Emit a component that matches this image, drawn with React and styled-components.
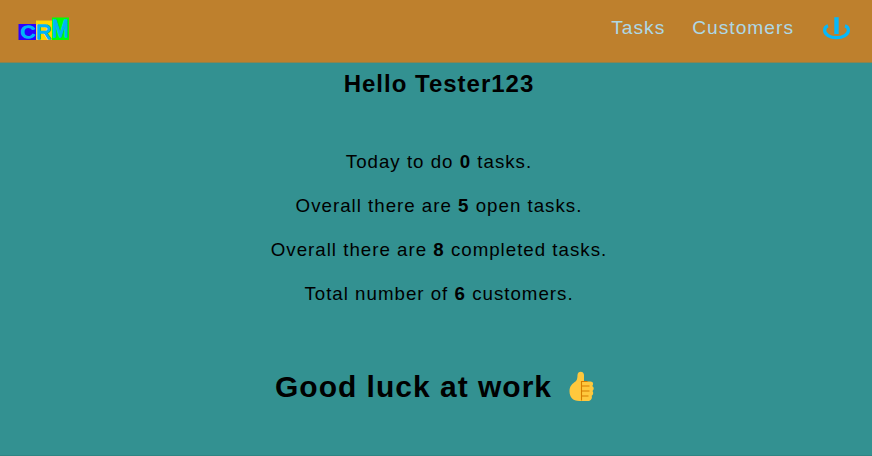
import React from "react";
import styled, { createGlobalStyle } from "styled-components";

const GlobalStyle = createGlobalStyle`
  * { box-sizing: border-box; }
  body {
    margin: 0;
    background: #339191;
    color: #000;
    font-family: "Liberation Sans", Arial, sans-serif;
    font-size: 19.2px;
    letter-spacing: 1px;
    overflow: hidden;
  }
`;

const Page = styled.div`
  display: flex;
  flex-direction: column;
  height: 456px;
  border-bottom: 1px solid #2f8584;
`;

const Header = styled.header`
  display: flex;
  justify-content: space-between;
  align-items: flex-start;
  flex: none;
  height: 63px;
  padding: 12px 21px 0 18px;
  background: #be802d;
  border-bottom: 1px solid #898450;
`;

const Logo = styled.svg`
  display: block;
  width: 52px;
  height: 34px;
  overflow: visible;
  font-family: "Liberation Sans", sans-serif;
  letter-spacing: 0;
`;

const Nav = styled.nav`
  display: flex;
  align-items: flex-start;
  padding-top: 4px;
`;

const NavLink = styled.a`
  color: #add8e6;
  line-height: 24px;
  margin-right: 27px;
  text-decoration: none;
`;

const PowerIcon = styled.svg`
  display: block;
  width: 30px;
  height: 26px;
`;

const Main = styled.main`
  display: flex;
  flex-direction: column;
  align-items: center;
  padding: 7px 0 0 6px;
`;

const Greeting = styled.h1`
  margin: 0 0 53px;
  font-size: 24px;
  line-height: 28px;
`;

const Stats = styled.div`
  display: flex;
  flex-direction: column;
  align-items: center;
  gap: 22px;
  font-size: 18.72px;
`;

const Stat = styled.p`
  margin: 0;
  line-height: 22px;
`;

const Farewell = styled.h2`
  display: flex;
  align-items: flex-start;
  margin: 64px 0 0;
  font-size: 30px;
  line-height: 36px;
`;

const Thumb = styled.svg`
  width: 42px;
  height: 36px;
  margin-left: 9px;
`;

const STATS = [
  ["Today to do", 0, "tasks."],
  ["Overall there are", 5, "open tasks."],
  ["Overall there are", 8, "completed tasks."],
  ["Total number of", 6, "customers."],
];

export default function App() {
  return (
    <>
      <GlobalStyle />
      <Page>
        <Header>
          <Logo viewBox="0 -4 52 34" role="img" aria-label="CRM">
            <path fill="#2a00ff" d="M.5 8H18v16H.5z" />
            <path fill="#ffd500" d="M18 4.500h16V24H18z" />
            <path fill="#00ff08" d="M34 1.500h17V24H34z" />
            <g fill="#00b4f8" stroke="#00b4f8" strokeWidth="1.400" strokeLinejoin="round">
              <text x="2.700" y="22.300" fontSize="16" textLength="14.500" lengthAdjust="spacingAndGlyphs">C</text>
              <text x="18" y="22.500" fontSize="21" textLength="15.500" lengthAdjust="spacingAndGlyphs">R</text>
              <text x="34.300" y="20.500" fontSize="24" textLength="16.500" lengthAdjust="spacingAndGlyphs">M</text>
            </g>
          </Logo>
          <Nav>
            <NavLink>Tasks</NavLink>
            <NavLink>Customers</NavLink>
            <PowerIcon viewBox="0 0 30 26" fill="none" stroke="#06b8fa">
              <path strokeWidth="3.200" d="M7 9.800C5 10.500 3.600 12.300 3.600 14.300C3.600 18.500 9 21.700 15.500 21.700S27.400 18.500 27.400 14.300C27.400 12.300 26 10.500 24 9.800" />
              <path strokeWidth="4.400" d="M15.500 1.200V18" />
            </PowerIcon>
          </Nav>
        </Header>
        <Main>
          <Greeting>Hello Tester123</Greeting>
          <Stats>
            {STATS.map(([before, count, after]) => (
              <Stat key={before + after}>
                {before} <b>{count}</b> {after}
              </Stat>
            ))}
          </Stats>
          <Farewell>
            Good luck at work
            <Thumb viewBox="0 0 42 36" aria-label="thumbs up">
              <path fill="#ffc83d" d="M16.500 6c0-4.500 6.500-4.500 6.500 0v6.500h6.500c3 0 3.200 3 1.700 4.500 2 1 2 3.500.3 5 1.300 1.500.7 4-.8 4.700.8 2.500-.7 5.300-3.700 5.300H18.500C11.500 32 8.500 28 8.500 22c0-5 3-7.500 6-9.500Q16.500 11 16.500 6z" />
              <path fill="none" stroke="#d67d00" strokeWidth="1.100" d="M20.500 12v19.500M20.500 12.500h6M20.500 17h8M20.500 22h8M20.500 27h7" />
            </Thumb>
          </Farewell>
        </Main>
      </Page>
    </>
  );
}
